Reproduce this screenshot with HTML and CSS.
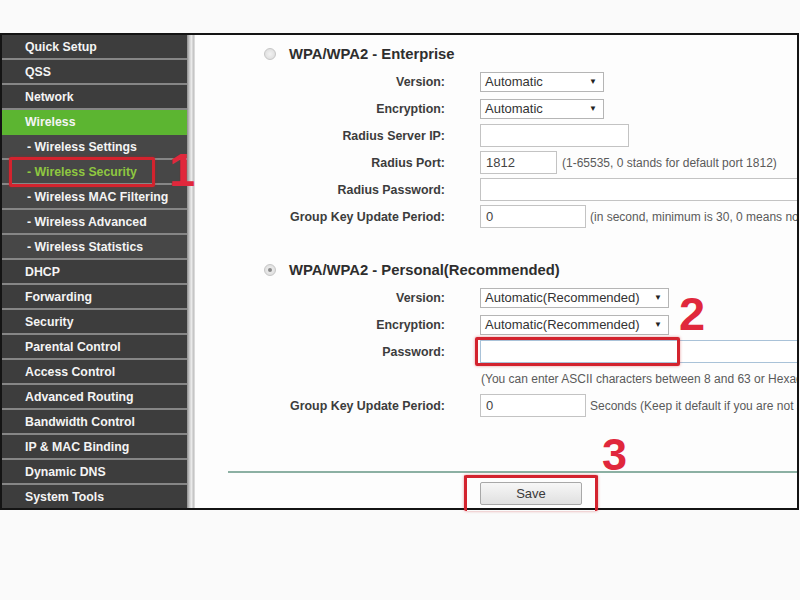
FILE: index.html
```html
<!DOCTYPE html>
<html>
<head>
  <meta charset="utf-8">
  <title>Wireless Security</title>
  <link rel="stylesheet" href="styles.css">
</head>
<body>
<div class="screen">
  <div class="frame">
    <nav class="menu">
      <a class="item">Quick Setup</a>
      <a class="item">QSS</a>
      <a class="item">Network</a>
      <a class="item active">Wireless</a>
      <a class="item sub">- Wireless Settings</a>
      <a class="item sub current">- Wireless Security</a>
      <a class="item sub">- Wireless MAC Filtering</a>
      <a class="item sub">- Wireless Advanced</a>
      <a class="item sub">- Wireless Statistics</a>
      <a class="item">DHCP</a>
      <a class="item">Forwarding</a>
      <a class="item">Security</a>
      <a class="item">Parental Control</a>
      <a class="item">Access Control</a>
      <a class="item">Advanced Routing</a>
      <a class="item">Bandwidth Control</a>
      <a class="item">IP &amp; MAC Binding</a>
      <a class="item">Dynamic DNS</a>
      <a class="item last">System Tools</a>
    </nav>
    <div class="splitter"></div>

    <main class="panel">
      <!-- enterprise -->
      <div class="section-head">
        <span class="radio"></span>
        <span class="section-title">WPA/WPA2 - Enterprise</span>
      </div>
      <div class="row">
        <label class="lbl">Version:</label>
        <div class="select w-small"><span>Automatic</span><span class="arrow">&#9660;</span></div>
      </div>
      <div class="row">
        <label class="lbl">Encryption:</label>
        <div class="select w-small"><span>Automatic</span><span class="arrow">&#9660;</span></div>
      </div>
      <div class="row">
        <label class="lbl">Radius Server IP:</label>
        <input class="field w-ip" type="text">
      </div>
      <div class="row">
        <label class="lbl">Radius Port:</label>
        <input class="field w-port" type="text" value="1812">
        <span class="hint">(1-65535, 0 stands for default port 1812)</span>
      </div>
      <div class="row">
        <label class="lbl">Radius Password:</label>
        <input class="field w-wide" type="text">
      </div>
      <div class="row">
        <label class="lbl">Group Key Update Period:</label>
        <input class="field w-key" type="text" value="0">
        <span class="hint">(in second, minimum is 30, 0 means no update)</span>
      </div>

      <!-- personal -->
      <div class="section-head second">
        <span class="radio on"></span>
        <span class="section-title">WPA/WPA2 - Personal(Recommended)</span>
      </div>
      <div class="row">
        <label class="lbl">Version:</label>
        <div class="select w-rec"><span>Automatic(Recommended)</span><span class="arrow">&#9660;</span></div>
      </div>
      <div class="row">
        <label class="lbl">Encryption:</label>
        <div class="select w-rec"><span>Automatic(Recommended)</span><span class="arrow">&#9660;</span></div>
      </div>
      <div class="row">
        <label class="lbl">Password:</label>
        <input class="field w-wide focus" type="password">
      </div>
      <div class="row">
        <label class="lbl"></label>
        <span class="hint note">(You can enter ASCII characters between 8 and 63 or Hexadecimal characters between 8 and 64.)</span>
      </div>
      <div class="row">
        <label class="lbl">Group Key Update Period:</label>
        <input class="field w-key" type="text" value="0">
        <span class="hint">Seconds (Keep it default if you are not sure, minimum is 30, 0 means no update)</span>
      </div>

      <hr class="rule">
      <div class="actions">
        <button class="btn">Save</button>
      </div>
    </main>
  </div>

  <!-- tutorial markers -->
  <div class="mark m1"></div>
  <div class="mark m2"></div>
  <div class="mark m3"></div>
  <span class="num n1">1</span>
  <span class="num n2">2</span>
  <span class="num n3">3</span>
</div>
</body>
</html>
```

FILE: styles.css
```css
/* page */
body {
  margin: 0;
  background-color: #fafafa;
  font-family: "Liberation Sans", Arial, sans-serif;
}

.screen {
  position: relative;
  padding-top: 33px;
  height: 567px;
}

.frame {
  width: 799px;
  height: 477px;
  box-sizing: border-box;
  border: 2px solid #141414;
  display: flex;
  overflow: hidden;
  background-color: #fdfdfd;
}

/* left menu */
.menu {
  width: 185px;
  flex-shrink: 0;
  display: flex;
  flex-direction: column;
  background-color: #3d3d3d;
}

.menu .item {
  height: 23px;
  border-bottom: 2px solid #868686;
  display: flex;
  align-items: center;
  padding-left: 23px;
  color: #f4f4f4;
  font-size: 12.3px;
  font-weight: bold;
  background-color: #3d3d3d;
  white-space: nowrap;
}

.menu .item.sub {
  padding-left: 25px;
  background-color: #474747;
}

.menu .item.active {
  background-color: #5cb531;
  border-bottom-color: #5cb531;
}

.menu .item.current {
  color: #8fc740;
}

.menu .item.last {
  border-bottom: 0;
}

.splitter {
  width: 8px;
  flex-shrink: 0;
  background: linear-gradient(to right, #8e8e8e, #c9c9c9 30%, #ececec 55%, #c4c4c4 80%, #e4e4e4);
}

/* form area */
.panel {
  flex: 1;
  overflow: hidden;
  padding-top: 5px;
  color: #3a3a3a;
}

.section-head {
  height: 28px;
  display: flex;
  align-items: center;
  padding-left: 69px;
}

.section-head.second {
  margin-top: 26px;
}

.radio {
  width: 10px;
  height: 10px;
  border-radius: 50%;
  border: 1px solid #c6c6c6;
  background: radial-gradient(circle, #f2f2f2, #d9d9d9);
  margin-right: 13px;
  position: relative;
}

.radio.on::after {
  content: "";
  position: absolute;
  left: 3px;
  top: 3px;
  width: 4px;
  height: 4px;
  border-radius: 50%;
  background-color: #8a8a8a;
}

.section-title {
  font-size: 14.8px;
  font-weight: bold;
  color: #2e2e2e;
  white-space: nowrap;
}

.row {
  height: 27px;
  display: flex;
  align-items: center;
  white-space: nowrap;
}

.lbl {
  width: 250px;
  flex-shrink: 0;
  text-align: right;
  margin-right: 35px;
  font-size: 12.4px;
  font-weight: bold;
  color: #3c3c3c;
}

.select {
  height: 20px;
  box-sizing: border-box;
  border: 1px solid #b5b5b5;
  background-color: #fff;
  display: flex;
  align-items: center;
  justify-content: space-between;
  padding: 0 6px 0 4px;
  font-size: 13px;
  color: #333;
  flex-shrink: 0;
}

.select .arrow {
  font-size: 8px;
  color: #222;
}

.w-small { width: 124px; }
.w-rec { width: 189px; }

.field {
  height: 23px;
  box-sizing: border-box;
  border: 1px solid #c3c3c3;
  background-color: #fff;
  padding: 0 5px;
  font-family: "Liberation Sans", Arial, sans-serif;
  font-size: 13px;
  color: #444;
  flex-shrink: 0;
  margin: 0;
}

.w-ip { width: 149px; }
.w-port { width: 77px; }
.w-key { width: 106px; }
.w-wide { width: 340px; }

.field.focus {
  border-color: #a9c2d8;
}

.hint {
  font-size: 12px;
  color: #5a5a5a;
  margin-left: 5px;
}

.hint.note {
  margin-left: 1px;
}

.row .w-key + .hint {
  margin-left: 4px;
}

.rule {
  margin: 52px 0 0 33px;
  border: 0;
  height: 2px;
  background-color: #8cb0a3;
}

.actions {
  padding: 9px 0 0 285px;
}

.btn {
  width: 102px;
  height: 23px;
  border: 1px solid #a8a8a8;
  border-radius: 2px;
  background: linear-gradient(#f7f7f7, #e0e0e0);
  font-family: "Liberation Sans", Arial, sans-serif;
  font-size: 13px;
  color: #3a3a3a;
}

/* red tutorial markers drawn over the screenshot */
.mark {
  position: absolute;
  border: 3px solid #d3232e;
  border-radius: 2px;
  box-shadow: 0 0 3px rgba(200, 20, 30, 0.45);
}

.m1 { left: 9px; top: 157px; width: 140px; height: 24px; }
.m2 { left: 475px; top: 337px; width: 199px; height: 23px; }
.m3 { left: 464px; top: 475px; width: 128px; height: 33px; border-bottom: 0; }

.num {
  position: absolute;
  color: #e0283c;
  font-family: "Liberation Sans", Arial, sans-serif;
  font-weight: bold;
  font-size: 47px;
  line-height: 1;
}

.n1 { left: 169px; top: 146px; }
.n2 { left: 679px; top: 290px; }
.n3 { left: 602px; top: 432px; font-size: 45px; }
```
